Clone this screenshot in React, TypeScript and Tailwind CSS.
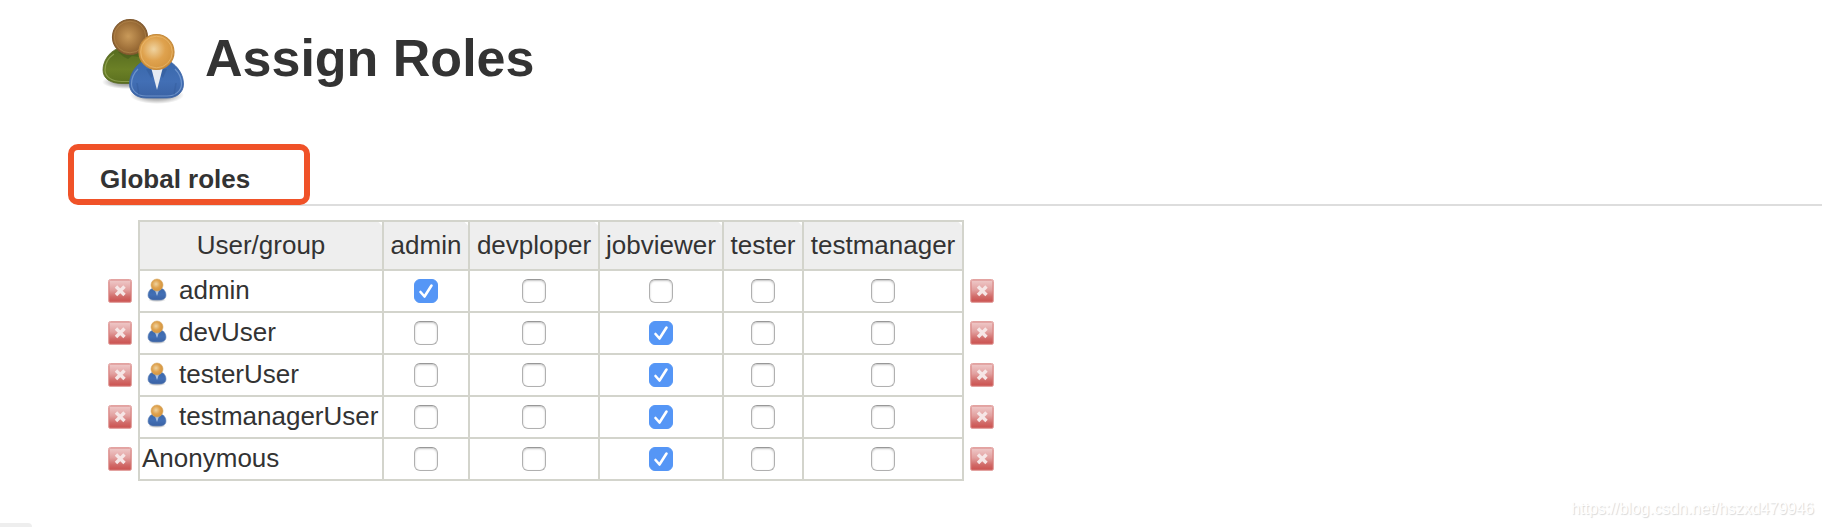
const roles = ['admin', 'devploper', 'jobviewer', 'tester', 'testmanager'];

type Assignment = {
  name: string;
  isUser: boolean;
  granted: string[];
};

const assignments: Assignment[] = [
  { name: 'admin', isUser: true, granted: ['admin'] },
  { name: 'devUser', isUser: true, granted: ['jobviewer'] },
  { name: 'testerUser', isUser: true, granted: ['jobviewer'] },
  { name: 'testmanagerUser', isUser: true, granted: ['jobviewer'] },
  { name: 'Anonymous', isUser: false, granted: ['jobviewer'] },
];

function IconGradients() {
  return (
    <svg className="absolute h-0 w-0" aria-hidden>
      <defs>
        <radialGradient id="gold-head" cx="0.42" cy="0.42" r="0.6">
          <stop offset="0%" stopColor="#efd3a0" />
          <stop offset="55%" stopColor="#dfa24e" />
          <stop offset="100%" stopColor="#d3943e" />
        </radialGradient>
        <radialGradient id="brown-head" cx="0.45" cy="0.48" r="0.6">
          <stop offset="0%" stopColor="#c99a5a" />
          <stop offset="60%" stopColor="#a0713a" />
          <stop offset="100%" stopColor="#80582a" />
        </radialGradient>
        <linearGradient id="blue-body" x1="0" x2="0" y1="0" y2="1">
          <stop offset="0%" stopColor="#3a68ab" />
          <stop offset="55%" stopColor="#426fb5" />
          <stop offset="100%" stopColor="#3a62a4" />
        </linearGradient>
        <linearGradient id="green-body" x1="0" x2="0" y1="0" y2="1">
          <stop offset="0%" stopColor="#556a1f" />
          <stop offset="60%" stopColor="#6b8026" />
          <stop offset="100%" stopColor="#5b701f" />
        </linearGradient>
        <radialGradient id="ground-shadow">
          <stop offset="0%" stopColor="#000" stopOpacity="0.5" />
          <stop offset="60%" stopColor="#000" stopOpacity="0.25" />
          <stop offset="100%" stopColor="#000" stopOpacity="0" />
        </radialGradient>
        <linearGradient id="delete-face" x1="0" x2="0" y1="0" y2="1">
          <stop offset="0%" stopColor="#f0cccc" />
          <stop offset="45%" stopColor="#e2a09f" />
          <stop offset="75%" stopColor="#d16a68" />
          <stop offset="100%" stopColor="#cb4f4d" />
        </linearGradient>
      </defs>
    </svg>
  );
}

function UsersIcon() {
  return (
    <svg viewBox="0 0 96 96" className="h-24 w-24 shrink-0" aria-hidden>
      <ellipse cx="31" cy="69" rx="25" ry="7" fill="url(#ground-shadow)" />
      <path
        d="M23 35 C12 39 7 49 7 57 C7 66 15 70.500 26 70.500 H46 C54 70 58 66 58 59 C58 49 54 38 45 35 Z"
        fill="url(#green-body)"
        stroke="#5a6b2a"
        strokeWidth="0.800"
      />
      <path
        d="M18 41 C12 45 9 51 9 57 C9 64 16 68.500 26 68.500 H44"
        fill="none"
        stroke="#a5b569"
        strokeWidth="1.200"
        opacity="0.6"
      />
      <path d="M22 39 L28 44 L32 46 L36 43 L44 44 L42 38 Z" fill="#3f5118" opacity="0.45" />
      <circle cx="34" cy="24" r="17.500" fill="url(#brown-head)" stroke="#80592f" strokeWidth="1.200" />
      <circle cx="34" cy="24" r="15.800" fill="none" stroke="#c69a5f" strokeWidth="1" opacity="0.4" />

      <ellipse cx="61" cy="82" rx="27" ry="9" fill="url(#ground-shadow)" />
      <path
        d="M48 48 C39 52 33.500 62 33.500 71 C33.500 80 41 85 50 85 H71 C80 85 87.500 80 87.500 71 C87.500 62 82 53 73 48 Z"
        fill="url(#blue-body)"
        stroke="#3d65a5"
        strokeWidth="0.800"
      />
      <path
        d="M42 56 C38 60 35.500 66 35.500 71 C35.500 78 42 83 50 83 H71 C79 83 85.500 78 85.500 71 C85.500 66 83 60 79 56"
        fill="none"
        stroke="#8aaddd"
        strokeWidth="1.200"
        opacity="0.6"
      />
      <path d="M50 56 L55 65 L58 62 L61 78 L64 62 L67 65 L71 56 Z" fill="#2d5490" opacity="0.4" />
      <path d="M41 70 L43 82 M80 70 L78 82" stroke="#2d5490" strokeWidth="1.500" opacity="0.3" />
      <path d="M55.500 56 H66.500 L61 77 Z" fill="#e6ebf2" />
      <circle cx="60.500" cy="39" r="17.500" fill="url(#gold-head)" stroke="#c48a3c" strokeWidth="1.200" />
      <circle cx="60.500" cy="39" r="15.800" fill="none" stroke="#efc27a" strokeWidth="1" opacity="0.6" />
    </svg>
  );
}

function UserIcon() {
  return (
    <svg viewBox="0 0 24 24" className="h-6 w-6 shrink-0" aria-hidden>
      <ellipse cx="12" cy="22" rx="9" ry="2" fill="url(#ground-shadow)" opacity="0.6" />
      <path
        d="M8 10 C4.500 11.500 3 14 3 17 C3 20.500 5.500 22 9 22 H15 C18.500 22 21 20.500 21 17 C21 14 19.500 11.500 16 10 Z"
        fill="url(#blue-body)"
        stroke="#6d8bba"
        strokeWidth="0.600"
      />
      <path d="M10 12.500 H14 L12 18 Z" fill="#a9bfdd" />
      <circle cx="12" cy="7" r="6" fill="url(#gold-head)" stroke="#d6a761" strokeWidth="0.600" />
    </svg>
  );
}

function DeleteButton({ name }: { name: string }) {
  return (
    <button type="button" aria-label={`Remove ${name}`} className="block h-6 w-6">
      <svg viewBox="0 0 24 24" className="h-6 w-6" aria-hidden>
        <rect x="0.500" y="0.500" width="23" height="23" rx="2" fill="url(#delete-face)" stroke="#e3a3a1" />
        <rect x="1.500" y="1.500" width="21" height="21" rx="1" fill="none" stroke="#d47c7a" opacity="0.45" />
        <path d="M8 7.500 L16.500 16 M16.500 7.500 L8 16" stroke="#f6e6e6" strokeWidth="3.400" />
      </svg>
    </button>
  );
}

function RoleCheckbox({ label, checked }: { label: string; checked: boolean }) {
  return (
    <label className="relative mx-auto block h-6 w-6">
      <input
        type="checkbox"
        aria-label={label}
        defaultChecked={checked}
        className="peer block h-6 w-6 appearance-none rounded-md border border-[#b0b0b0] border-t-[#989898] bg-white shadow-[inset_0_1px_2px_#c4c4c4] checked:border-[#5596f6] checked:bg-[#5596f6] checked:shadow-none"
      />
      <svg
        viewBox="0 0 24 24"
        className="pointer-events-none absolute inset-0 hidden h-6 w-6 peer-checked:block"
        aria-hidden>
        <path
          d="M6.500 13 L10.500 17.500 L17.500 6.500"
          fill="none"
          stroke="#fff"
          strokeWidth="2.600"
          strokeLinecap="round"
          strokeLinejoin="round"
        />
      </svg>
    </label>
  );
}

function RolesTable() {
  return (
    <table className="mt-3.5 border-collapse text-[26px] leading-[30px]">
      <colgroup>
        <col className="w-[39px]" />
        <col className="w-[244px]" />
        <col className="w-[86px]" />
        <col className="w-[130px]" />
        <col className="w-[124px]" />
        <col className="w-[80px]" />
        <col className="w-[160px]" />
        <col className="w-[38px]" />
      </colgroup>
      <thead>
        <tr className="h-[49px]">
          <td />
          {['User/group', ...roles].map((heading) => (
            <th
              key={heading}
              scope="col"
              className="border-2 border-[#d3d4cc] bg-[linear-gradient(225deg,#fff_2px,#eee_3px)] p-0 pb-0.5 font-normal">
              {heading}
            </th>
          ))}
          <td />
        </tr>
      </thead>
      <tbody>
        {assignments.map(({ name, isUser, granted }) => (
          <tr key={name} className="h-[42px]">
            <td className="py-0 pr-0 pl-2">
              <DeleteButton name={name} />
            </td>
            <td className="border-2 border-[#d3d4cc] p-0 pb-0.5 pl-0.5">
              <span className="flex items-center whitespace-nowrap">
                {isUser ? (
                  <span className="mr-2.5 ml-[3px]">
                    <UserIcon />
                  </span>
                ) : null}
                {name}
              </span>
            </td>
            {roles.map((role) => (
              <td key={role} className="border-2 border-[#d3d4cc] p-0">
                <RoleCheckbox label={`${role} role for ${name}`} checked={granted.includes(role)} />
              </td>
            ))}
            <td className="py-0 pr-0 pl-1.5">
              <DeleteButton name={name} />
            </td>
          </tr>
        ))}
      </tbody>
    </table>
  );
}

export default function App() {
  return (
    <div className="bg-white font-['Liberation_Sans',Arial,sans-serif] text-[#333]">
      <IconGradients />
      <header className="flex items-center gap-[13px] pt-[13px] pl-24">
        <UsersIcon />
        <h1 className="pb-1.5 text-[52px] leading-[60px] font-bold">Assign Roles</h1>
      </header>

      <main className="mt-[55px] pl-[100px]">
        <div className="relative border-b-2 border-[#ddd] pb-2.5">
          <h2 className="text-[26px] leading-[30px] font-bold">Global roles</h2>
          {/* highlight frame around the section title */}
          <div className="pointer-events-none absolute -top-5 -left-8 h-[61px] w-[242px] rounded-[10px] border-6 border-[#f05228]" />
        </div>
        <RolesTable />
      </main>

      <footer className="mt-4 flex items-end justify-between">
        <div className="h-1 w-8 rounded-tr-md bg-[#eee]" />
        <p className="pr-2 pb-1.5 text-base leading-6 text-white [text-shadow:1px_1px_1px_#d8d8d8]">
          https://blog.csdn.net/hszxd479946
        </p>
      </footer>
    </div>
  );
}
